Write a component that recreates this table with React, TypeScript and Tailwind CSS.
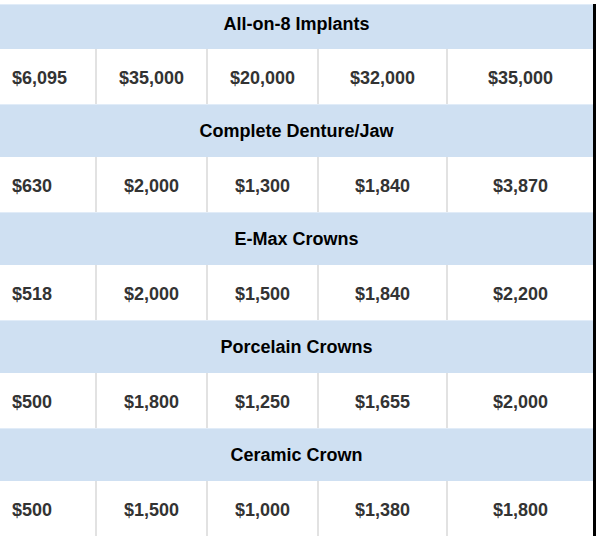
import React from 'react';

const sections = [
  { title: 'All-on-8 Implants', prices: ['$6,095', '$35,000', '$20,000', '$32,000', '$35,000'] },
  { title: 'Complete Denture/Jaw', prices: ['$630', '$2,000', '$1,300', '$1,840', '$3,870'] },
  { title: 'E-Max Crowns', prices: ['$518', '$2,000', '$1,500', '$1,840', '$2,200'] },
  { title: 'Porcelain Crowns', prices: ['$500', '$1,800', '$1,250', '$1,655', '$2,000'] },
  { title: 'Ceramic Crown', prices: ['$500', '$1,500', '$1,000', '$1,380', '$1,800'] },
];

export default function App() {
  return (
    <div className="w-[596px] h-[536px] overflow-hidden bg-white font-['Liberation_Sans',Arial,sans-serif] text-[18px] font-bold">
      <div className="h-[4px] bg-white" />
      <div className="flex">
        <div className="w-[593px]">
          {sections.map((s, i) => (
            <div key={s.title}>
              <div
                className={`flex items-center justify-center bg-[#cfe0f2] border-t border-[#e1ecf8] text-black ${
                  i === 0 ? 'h-[45px] pb-[6px]' : 'h-[53px] pt-[1px]'
                }`}
              >
                {s.title}
              </div>
              <div className="grid grid-cols-[97px_111px_111px_129px_145px] h-[55px] text-[#333333]">
                {s.prices.map((p, j) => (
                  <div
                    key={j}
                    className={`flex items-center pt-[3px] ${
                      j === 0 ? 'justify-start pl-[12px]' : 'justify-center'
                    } ${j < 4 ? 'border-r-2 border-[#e2e2e2]' : ''}`}
                  >
                    {p}
                  </div>
                ))}
              </div>
            </div>
          ))}
        </div>
        <div className="w-[3px] bg-black" />
      </div>
    </div>
  );
}
